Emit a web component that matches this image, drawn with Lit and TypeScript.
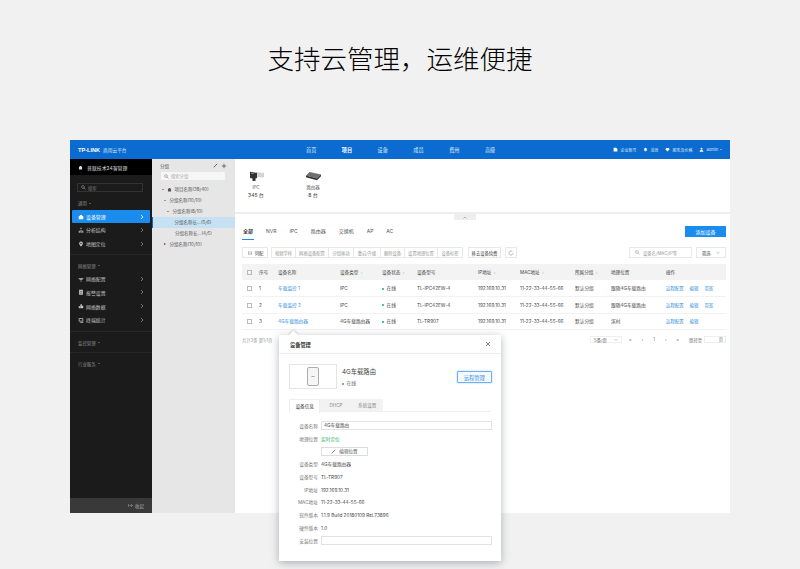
import { LitElement, html, css } from "lit";
import { customElement } from "lit/decorators.js";

const chev = html`<svg class="chev" width="4" height="6" viewBox="0 0 4 6"><path d="M1 1l2 2-2 2" fill="none" stroke="currentColor" stroke-width=".8"/></svg>`;
const ic = (d: string) => html`<svg class="ic" viewBox="0 0 8 8"><path d="${d}" fill="currentColor"/></svg>`;
const caret = html`<svg width="4" height="3" viewBox="0 0 4 3"><path d="M.5 1L2 2.500 3.500 1" fill="none" stroke="#888" stroke-width=".5"/></svg>`;

const rows = [
  ["1", "车载监控 1", "IPC", "TL-IPC42EW-4", "192.169.10.31", "11-22-33-44-55-66", "默认分组", "跟随4G车载路由", true],
  ["2", "车载监控 2", "IPC", "TL-IPC42EW-4", "192.169.10.31", "11-22-33-44-55-66", "默认分组", "跟随4G车载路由", true],
  ["3", "4G车载路由器", "4G车载路由器", "TL-TR907", "192.169.10.31", "11-22-33-44-55-66", "默认分组", "滨村", false],
] as const;

@customElement("app-root")
export class AppRoot extends LitElement {
  static styles = css`
    :host { display: block; width: 800px; height: 569px; overflow: hidden; position: relative; background: #f1f1f1;
      font-family: Inter, "Noto Sans CJK SC", sans-serif; color: #333; }
    * { box-sizing: border-box; }
    .hero { height: 140px; display: flex; justify-content: center; padding-top: 38px; }
    .hero h1 { margin: 0; font-size: 26.5px; font-weight: 300; line-height: 42px; color: #000; }
    .window { width: 660px; height: 373px; margin-left: 70px; background: #fff; display: flex; flex-direction: column; position: relative; }
    .ic { width: 6px; height: 6px; flex: none; }
    .top { height: 19px; background: #0b6bd0; color: #dbe9f8; display: flex; align-items: center; font-size: 5px; flex: none; position: relative; }
    .logo { padding-left: 8px; display: flex; gap: 3px; align-items: center; white-space: nowrap; font-size: 4.7px; }
    .logo b { font: 700 5.6px "Liberation Sans", sans-serif; color: #fff; }
    .nav { position: absolute; left: 236px; display: flex; gap: 25.4px; font-size: 5.2px; }
    .nav .on { color: #fff; font-weight: 700; }
    .tools { margin-left: auto; padding-right: 8px; display: flex; gap: 7px; font-size: 4px; align-items: center; }
    .tools span { display: flex; gap: 2px; align-items: center; }
    .tools .ic { width: 5px; height: 5px; color: #fff; }
    .body { flex: 1; display: flex; min-height: 0; }
    .side { width: 82px; background: #1b1b1b; color: #c4c4c4; display: flex; flex-direction: column; font-size: 4.9px; flex: none; }
    .brand { height: 16px; background: #000; display: flex; align-items: center; gap: 4px; padding-left: 8px; color: #ddd; font-size: 4.9px; flex: none; }
    .brand .ic { width: 5px; height: 5px; }
    .ssearch { margin: 8px 9px 0 7px; height: 9px; border: 1px solid #333; display: flex; align-items: center; gap: 2px; padding-left: 3px; font-size: 4.3px; color: #777; flex: none; }
    .grp { font-size: 4.4px; color: #8a8a8a; padding-left: 8px; height: 11px; display: flex; align-items: center; gap: 2px; flex: none; }
    .tri { display: inline-block; width: 0; height: 0; border-left: 1.3px solid transparent; border-right: 1.3px solid transparent; border-top: 1.6px solid currentColor; }
    .tri.up { border-top: 0; border-bottom: 1.6px solid currentColor; }
    .item { height: 13.7px; display: flex; align-items: center; gap: 2px; padding: 0 8px 0 8px; flex: none; }
    .item .chev { margin-left: auto; color: #888; }
    .item.on { background: #1a8cee; color: #fff; height: 13px; margin: 1.5px 2px 0 2px; padding: 0 6px; border-radius: 1px; }
    .item.on .chev { color: #fff; }
    .gen { margin-top: 5.5px; } .net { margin-top: 5px; } .mon { margin-top: 5.5px; } .ind { margin-top: 5px; }
    .item.first { margin-top: .5px; }
    .sep { border-top: 1px solid #272727; flex: none; margin-top: 4px; }
    .foot { margin-top: auto; height: 15px; background: #393939; color: #aaa; display: flex; justify-content: flex-end; align-items: center; font-size: 4.5px; padding-right: 8px; gap: 2px; flex: none; }
    .tree { width: 83px; background: #e6e6e6; flex: none; font-size: 4.5px; color: #555; }
    .thead { height: 13px; display: flex; align-items: center; justify-content: space-between; padding: 0 8px 0 8px; }
    .tools2 { display: flex; gap: 3px; align-items: center; }
    .tsearch { margin: 0 10px 0 9px; height: 8px; background: #f6f6f6; display: flex; align-items: center; gap: 2px; padding-left: 3px; color: #aaa; font-size: 4.3px; }
    .tlist { padding-top: 3.5px; }
    .node { height: 11px; display: flex; align-items: center; gap: 2px; white-space: nowrap; }
    .node .ic { width: 5px; height: 5px; }
    .node .tri { margin-right: 1.4px; color: #444; }
    .node .rt { border-top: 1.3px solid transparent; border-bottom: 1.3px solid transparent; border-left: 2.4px solid #444; display: inline-block; width: 0; height: 0; margin-right: 1.6px; }
    .l0 { padding-left: 10px; } .l1 { padding-left: 12px; } .l2 { padding-left: 15px; } .l3 { padding-left: 23px; }
    .node.sel { background: #c5e1f3; border-left: 1.5px solid #0b6bd0; padding-left: 21.5px; }
    .main { flex: 1; min-width: 0; display: flex; flex-direction: column; background: #fff; }
    .stats { height: 55px; display: flex; padding: 12px 0 0 7px; border-bottom: 2px solid #eee; flex: none; }
    .stat { font-size: 4.4px; color: #555; display: flex; flex-direction: column; align-items: center; line-height: 7px; width: 28px; flex: none; }
    .stat.two { margin-left: 32px; width: 22px; }
    .stat b { font-weight: 400; font-size: 5px; color: #333; line-height: 8px; }
    .stat svg { margin-bottom: 2.5px; flex: none; }
    .handle { height: 6px; width: 22px; background: #eee; align-self: flex-end; margin-right: 254px; display: flex; align-items: center; justify-content: center; color: #777; flex: none; }
    .tabsrow { display: flex; align-items: flex-start; padding: 4px 4px 0 7px; height: 21px; flex: none; }
    .tabs { display: flex; gap: 13px; font-size: 5px; color: #555; line-height: 15px; margin-top: -.5px; }
    .tabs .on { color: #222; font-weight: 500; border-bottom: 1px solid #1a8cee; padding: 0 1px; height: 16.5px; margin-right: -1px; }
    .btn-p { margin-left: auto; width: 41px; height: 10.5px; background: #1a8cee; color: #fff; font-size: 5px; display: flex; align-items: center; justify-content: center; margin-top: 2px; }
    .bar { display: flex; padding: 0 4px 0 7px; gap: 3px; height: 11px; align-items: stretch; flex: none; margin-top: 6px; font-size: 4.3px; color: #999; }
    .b { border: 1px solid #e8e8e8; display: flex; align-items: center; justify-content: center; background: #fff; white-space: nowrap; flex: none; }
    .bgroup { display: flex; margin-right: 2px; }
    .bgroup .b { border-left-width: 0; } .bgroup .b:first-child { border-left-width: 1px; }
    .w25 { width: 25px; } .w33 { width: 33px; } .w27 { width: 27px; } .w24 { width: 24px; }
    .dark { color: #444; }
    .list { width: 26px; gap: 2px; }
    .list .ic { color: #aaa; }
    .refresh { width: 12px; margin-left: 1px; }
    .right { margin-left: auto; display: flex; gap: 4px; }
    .find { width: 63px; justify-content: flex-start; padding-left: 5px; gap: 3px; }
    .filter { width: 30px; justify-content: space-between; padding: 0 5px; }
    table { border-collapse: collapse; table-layout: fixed; width: 484px; margin: 6px 0 0 7px; font-size: 4.7px; color: #444; flex: none; }
    th { background: #f3f3f3; font-weight: 400; height: 16px; text-align: left; padding: 0; color: #444; font-size: 4.6px; }
    td { height: 16.5px; padding: 0; border-bottom: 1px solid #f2f2f2; white-space: nowrap; }
    .c1 { width: 17px; } .c2 { width: 19px; } .c3 { width: 62px; } .c4 { width: 42px; } .c5 { width: 35px; } .c6 { width: 61px; }
    .c7 { width: 42px; } .c8 { width: 55px; } .c9 { width: 36px; } .c10 { width: 55px; } .c11 { width: 60px; }
    .cb { display: inline-block; width: 5px; height: 5px; border: 1px solid #bbb; margin-left: 5px; vertical-align: middle; }
    .link { color: #2f8fe0; }
    .dot { display: inline-block; width: 2px; height: 2px; border-radius: 50%; background: #17b26a; margin-right: 2.5px; vertical-align: middle; }
    .acts { display: flex; gap: 6px; font-size: 4.4px; }
    .sort { color: #bbb; margin-left: 1px; }
    .pager { display: flex; align-items: center; height: 18px; padding: 0 4px 0 7px; font-size: 4.3px; color: #999; flex: none; margin-top: .5px; }
    .pager .r { margin-left: auto; display: flex; align-items: center; gap: 10px; color: #777; }
    .sel-s { width: 32px; height: 7.5px; border: 1px solid #eee; display: flex; justify-content: space-between; padding: 0 3px; align-items: center; color: #555; margin-right: -3px; }
    .goto { width: 22px; height: 7.5px; border: 1px solid #eee; text-align: right; padding-right: 2px; line-height: 6px; margin-left: -8px; }
    .modal { position: absolute; left: 279px; top: 335px; width: 222px; height: 226px; background: #fff; box-shadow: 0 2px 8px rgba(40, 50, 70, .35); font-size: 4.8px; color: #444; display: flex; flex-direction: column; }
    .arrow { position: absolute; left: 10.500px; top: -3.500px; width: 7px; height: 7px; background: #fff; transform: rotate(45deg); box-shadow: -1px -1px 2px rgba(40, 50, 70, .18); }
    .mh { height: 19px; flex: none; display: flex; align-items: center; justify-content: space-between; padding: 0 10px 0 11px; font-size: 5.2px; font-weight: 700; color: #333; border-bottom: 1px solid #ececec; position: relative; }
    .devrow { display: flex; padding: 10px 10px 0 10px; height: 45px; flex: none; position: relative; }
    .thumb { width: 48px; height: 25px; border: 1px solid #e4e4e4; display: flex; align-items: center; justify-content: center; }
    .devinfo { margin-left: 5px; padding-top: 3px; }
    .devname { font-size: 6.3px; color: #444; line-height: 10px; }
    .devst { font-size: 4.8px; color: #666; line-height: 12px; }
    .remote { position: absolute; right: 9px; top: 17px; width: 35px; height: 12px; border: 1px solid #6db0ea; background: #f4f9fe; box-shadow: 0 0 2px #9cc8ef; border-radius: 1px; color: #2f8fe0; font-size: 5.2px; display: flex; align-items: center; justify-content: center; }
    .mtabs { margin: 0 10px; display: flex; height: 13px; border-bottom: 1px solid #f0f0f0; flex: none; font-size: 4.6px; color: #888; }
    .mtabs span { width: 31.300px; background: #f2f2f2; display: flex; align-items: center; justify-content: center; }
    .mtabs .on { background: #fff; color: #333; border: 1px solid #eee; border-bottom: 1px solid #fff; height: 14px; }
    .form { padding: 7.600px 10px 0; display: grid; grid-template-columns: 29px 1fr; column-gap: 3px; align-items: center; grid-auto-rows: 12.750px; font-size: 4.7px; flex: none; }
    .form label { text-align: right; color: #777; white-space: nowrap; }
    .inp { height: 9px; border: 1px solid #e2e2e2; padding-left: 2px; line-height: 7px; width: 171px; }
    .geo { color: #27ae60; }
    .edit { width: 47px; height: 9px; border: 1px solid #ddd; display: flex; align-items: center; justify-content: center; gap: 3px; color: #555; font-size: 4.6px; }
  `;

  render() {
    const building = "M1.500 3h5v4h-5zM2.500 3V1.500h3V3z";
    const mag = (c: string) => html`<svg width="5" height="5" viewBox="0 0 5 5"><circle cx="2" cy="2" r="1.400" fill="none" stroke="${c}" stroke-width=".6"/><path d="M3 3l1.500 1.500" stroke="${c}" stroke-width=".6"/></svg>`;
    return html`
      <div class="hero"><h1>支持云管理，运维便捷</h1></div>
      <div class="window">
        <div class="top">
          <div class="logo"><b>TP-LINK</b><span>商用云平台</span></div>
          <div class="nav"><span>首页</span><span class="on">项目</span><span>设备</span><span>成员</span><span>费用</span><span>高级</span></div>
          <div class="tools">
            <span>${ic("M1 1h4l2 2v4H1z")}企业账号</span>
            <span>${ic("M4 1a2 2 0 012 2v2l1 1H1l1-1V3a2 2 0 012-2zM3 7h2L4 8z")}消息</span>
            <span>${ic("M2 1.500h4L7.500 3.500 4 7 .5 3.500z")}服务及价格</span>
            <span>${ic("M4 1a1.600 1.600 0 110 3.200A1.600 1.600 0 014 1zM1 7.500c0-2 1.500-2.800 3-2.800s3 .8 3 2.800z")}admin <i class="tri"></i></span>
          </div>
        </div>
        <div class="body">
          <aside class="side">
            <div class="brand">${ic(building)}普联技术24客管理</div>
            <div class="ssearch">${mag("#999")}搜索</div>
            <div class="grp gen">通用 <i class="tri"></i></div>
            <div class="item on">${ic("M1 2.500h6V7H1zM2.500 2.500V1.200h3v1.300z")}设备管理${chev}</div>
            <div class="item">${ic("M3.300 1h1.400v2H3.300zM1 5h1.400v2.500H1zM3.300 4h1.400v3.500H3.300zM5.600 5H7v2.500H5.600z")}分析结构${chev}</div>
            <div class="item">${ic("M4 .8a2.500 2.500 0 012.500 2.500C6.500 5 4 7.500 4 7.500S1.500 5 1.500 3.300A2.500 2.500 0 014 .8zm0 1.600a.9.9 0 100 1.800.9.9 0 000-1.800z")}地图定位${chev}</div>
            <div class="sep"></div>
            <div class="grp net">网络管理 <i class="tri up"></i></div>
            <div class="item first">${ic("M.8 2.500h6.400v1H.8zM2 4.300h4v1H2zM3.300 6h1.400v1.200H3.300z")}网络配置${chev}</div>
            <div class="item">${ic("M1.500 1h5v6.500h-5zM3.500 2.500v2.300h1V2.500zM3.500 5.300v.9h1v-.9z")}报警设置${chev}</div>
            <div class="item">${ic("M1 4h1.500v3H1zM3 3l1-2 1 .5v2h2V7H3z")}网络数据${chev}</div>
            <div class="item">${ic("M1 1.500h6V6H1zM2 2.500V5h4V2.500zM3 6.500h4v1H3z")}终端统计${chev}</div>
            <div class="sep"></div>
            <div class="grp mon">监控管理 <i class="tri"></i></div>
            <div class="sep"></div>
            <div class="grp ind">行业服务 <i class="tri"></i></div>
            <div class="foot"><svg width="5" height="5" viewBox="0 0 5 5"><path d="M.5 1v3M1.500 2.500h3M3 1l1.500 1.500L3 4" fill="none" stroke="#aaa" stroke-width=".5"/></svg>收起</div>
          </aside>
          <section class="tree">
            <div class="thead"><span>分组</span><span class="tools2"><svg width="5" height="5" viewBox="0 0 5 5"><path d="M.8 4.300L4.200.8" stroke="#444" stroke-width=".8"/></svg><svg width="6" height="6" viewBox="0 0 6 6"><path d="M3 .8v4.400M.8 3h4.400" stroke="#444" stroke-width=".7"/></svg></span></div>
            <div class="tsearch">${mag("#888")}搜索分组</div>
            <div class="tlist">
              <div class="node l0"><i class="tri"></i>${ic(building)}项目名称(38/40)</div>
              <div class="node l1"><i class="tri"></i>分组名称(10/10)</div>
              <div class="node l2"><i class="tri"></i>分组名称(8/10)</div>
              <div class="node l3 sel">分组名称长...(5/6)</div>
              <div class="node l3">分组名称长...(4/5)</div>
              <div class="node l1"><i class="rt"></i>分组名称(10/10)</div>
            </div>
          </section>
          <main class="main">
            <div class="stats">
              <div class="stat">
                <svg width="15" height="10" viewBox="0 0 15 10"><path d="M7 1l8 1v4.500L7 6z" fill="#d4d4d4"/><path d="M1 .8l7 1.200v5L6.500 7.500V10h-3V7.500L1 7z" fill="#333"/><path d="M2 1.800h3v1.200H2z" fill="#777"/></svg>
                <span>IPC</span><b>345 台</b>
              </div>
              <div class="stat two">
                <svg width="17" height="10" viewBox="0 0 17 10"><path d="M4.500 1L16 3.500l-4 4L1 4.500z" fill="#6f6f6f"/><path d="M1 4.500l11 3v1.700L1 6.300zM12 7.500l4-4v1.700l-4 4z" fill="#2f2f2f"/></svg>
                <span>路由器</span><b>8 台</b>
              </div>
            </div>
            <div class="handle"><svg width="4" height="3" viewBox="0 0 4 3"><path d="M.5 2.500L2 1l1.500 1.500" fill="none" stroke="currentColor" stroke-width=".5"/></svg></div>
            <div class="tabsrow">
              <div class="tabs"><span class="on">全部</span><span>NVR</span><span>IPC</span><span>路由器</span><span>交换机</span><span>AP</span><span>AC</span></div>
              <div class="btn-p">添加设备</div>
            </div>
            <div class="bar">
              <div class="b dark list">${ic("M1.500 1.500h1v5h-1zM3.500 1.500h1v5h-1zM5.500 1.500h1v5h-1z")}列配</div>
              <div class="bgroup">
                <div class="b w25">视频学样</div>
                <div class="b w33">网络设备配置</div>
                <div class="b w25">分组移动</div>
                <div class="b w27">重启/升级</div>
                <div class="b w24">删除设备</div>
                <div class="b w33">设置地理位置</div>
                <div class="b w25">设备标签</div>
              </div>
              <div class="b dark w33">移去设备续费</div>
              <div class="b refresh"><svg width="6" height="6" viewBox="0 0 6 6"><path d="M5 3a2 2 0 11-.6-1.400" fill="none" stroke="#777" stroke-width=".5"/></svg></div>
              <div class="right">
                <div class="b find">${mag("#999")}设备名/MAC/IP等</div>
                <div class="b dark filter">筛选 ${caret}</div>
              </div>
            </div>
            <table>
              <colgroup><col class="c1"/><col class="c2"/><col class="c3"/><col class="c4"/><col class="c5"/><col class="c6"/><col class="c7"/><col class="c8"/><col class="c9"/><col class="c10"/><col class="c11"/></colgroup>
              <thead><tr>
                <th><i class="cb"></i></th><th>序号</th><th>设备名称</th><th>设备类型 <span class="sort">›</span></th><th>设备状态 <span class="sort">›</span></th><th>设备型号</th><th>IP地址 <span class="sort">›</span></th><th>MAC地址 <span class="sort">›</span></th><th>所属分组 <span class="sort">›</span></th><th>地理位置</th><th>操作</th>
              </tr></thead>
              <tbody>
                ${rows.map((r) => html`<tr>
                  <td><i class="cb"></i></td><td>${r[0]}</td><td class="link">${r[1]}</td><td>${r[2]}</td>
                  <td><i class="dot"></i>在线</td><td>${r[3]}</td><td>${r[4]}</td><td>${r[5]}</td><td>${r[6]}</td><td>${r[7]}</td>
                  <td><div class="acts link"><span>远程配置</span><span>编辑</span>${r[8] ? html`<span>带宽</span>` : ""}</div></td>
                </tr>`)}
              </tbody>
            </table>
            <div class="pager"><span>共计3条 第1/1页</span>
              <div class="r"><div class="sel-s">5条/页 ${caret}</div><span>«</span><span>‹</span><span>1</span><span>›</span><span>»</span><span>跳转至</span><div class="goto">页</div></div>
            </div>
          </main>
        </div>
      </div>
      <div class="modal">
        <div class="arrow"></div>
        <div class="mh"><span>设备管理</span><svg width="6" height="6" viewBox="0 0 6 6"><path d="M1 1l4 4M5 1L1 5" stroke="#555" stroke-width=".7"/></svg></div>
        <div class="devrow">
          <div class="thumb"><svg width="12" height="19" viewBox="0 0 12 19"><rect x=".5" y=".5" width="11" height="18" rx="1.500" fill="#f6f6f6" stroke="#999" stroke-width=".8"/><path d="M4.500 9.500h3" stroke="#888" stroke-width=".7"/></svg></div>
          <div class="devinfo"><div class="devname">4G车载路由</div><div class="devst"><i class="dot"></i>在线</div></div>
          <div class="remote">远程管理</div>
        </div>
        <div class="mtabs"><span class="on">设备信息</span><span>DHCP</span><span>系统设置</span></div>
        <div class="form">
          <label>设备名称</label><div class="inp">4G车载路由</div>
          <label>地理位置</label><div class="geo">实时定位</div>
          <span></span><div class="edit"><svg width="5" height="5" viewBox="0 0 5 5"><path d="M.8 4.300L4.200.8" stroke="#444" stroke-width=".7"/></svg>编辑位置</div>
          <label>设备类型</label><div>4G车载路由器</div>
          <label>设备型号</label><div>TL-TR907</div>
          <label>IP地址</label><div>192.169.10.31</div>
          <label>MAC地址</label><div>11-22-33-44-55-66</div>
          <label>软件版本</label><div>1.1.9 Build 20180109 Rel.73896</div>
          <label>硬件版本</label><div>1.0</div>
          <label>安装位置</label><div class="inp"></div>
        </div>
      </div>
    `;
  }
}
